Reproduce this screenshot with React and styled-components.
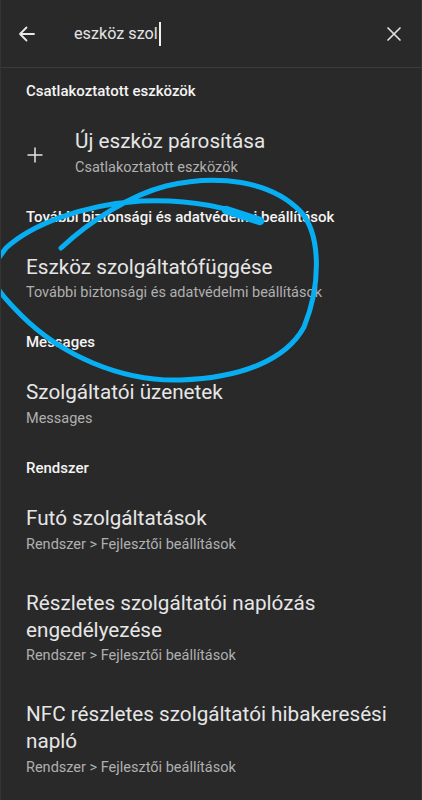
import React from "react";
import styled, { createGlobalStyle } from "styled-components";

const GlobalStyle = createGlobalStyle`
  html, body {
    margin: 0;
    padding: 0;
    background: #292929;
  }
  body {
    font-family: Roboto, "Noto Sans", "DejaVu Sans", sans-serif;
  }
`;

const Screen = styled.div`
  position: relative;
  width: 422px;
  height: 800px;
  box-sizing: border-box;
  background: #292929;
  border-left: 1px solid #343434;
  border-right: 1px solid #343434;
  overflow: hidden;
`;

const SearchBar = styled.div`
  display: flex;
  align-items: center;
  height: 67px;
  border-bottom: 1px solid #3b3b3b;
  padding: 0 17px 0 16px;
`;

const IconButton = styled.div`
  width: 20px;
  height: 20px;
  display: flex;
  align-items: center;
  justify-content: center;
  flex: none;
`;

const Query = styled.div`
  flex: 1;
  display: flex;
  align-items: center;
  margin-left: 37px;
  font-size: 16.2px;
  color: #e4e4e4;
`;

const Cursor = styled.span`
  display: inline-block;
  width: 2px;
  height: 24px;
  margin-left: 1px;
  background: #f0f0f0;
`;

const List = styled.div`
  padding-top: 2px;
`;

const SectionHeader = styled.div`
  padding: 11px 25px 10px;
  font-size: 15px;
  line-height: 20px;
  font-weight: 500;
  color: #f4f4f4;
`;

const Item = styled.div`
  display: flex;
  align-items: center;
  padding: 17px 25px;
`;

const ItemIcon = styled.div`
  width: 49px;
  flex: none;
  display: flex;
  align-items: center;
  padding-top: 4px;
`;

const ItemText = styled.div`
  display: flex;
  flex-direction: column;
`;

const Title = styled.div`
  font-size: 20.7px;
  line-height: 26.7px;
  color: #e6e6e6;
`;

const Subtitle = styled.div`
  margin-top: 2px;
  font-size: 14.5px;
  line-height: 22px;
  color: #b0b0b0;
`;

const Scribble = styled.svg`
  position: absolute;
  left: 0;
  top: 0;
  pointer-events: none;
`;

const BackArrow = () => (
  <svg width="18" height="18" viewBox="0 0 18 18" fill="none" stroke="#e8e8e8" strokeWidth="1.8" strokeLinecap="round" strokeLinejoin="round">
    <path d="M16 9H2M8.5 2.5L2 9l6.5 6.5" />
  </svg>
);

const CloseIcon = () => (
  <svg width="16" height="16" viewBox="0 0 16 16" fill="none" stroke="#e0e0e0" strokeWidth="1.7" strokeLinecap="round">
    <path d="M2 2l12 12M14 2L2 14" />
  </svg>
);

const PlusIcon = () => (
  <svg width="18" height="18" viewBox="0 0 18 18" fill="none" stroke="#e4e4e4" strokeWidth="1.5">
    <path d="M9 1.5v15M1.5 9h15" />
  </svg>
);

const sections = [
  {
    header: "Csatlakoztatott eszközök",
    items: [{ title: "Új eszköz párosítása", sub: "Csatlakoztatott eszközök", icon: true }],
  },
  {
    header: "További biztonsági és adatvédelmi beállítások",
    items: [{ title: "Eszköz szolgáltatófüggése", sub: "További biztonsági és adatvédelmi beállítások" }],
  },
  {
    header: "Messages",
    items: [{ title: "Szolgáltatói üzenetek", sub: "Messages" }],
  },
  {
    header: "Rendszer",
    items: [
      { title: "Futó szolgáltatások", sub: "Rendszer > Fejlesztői beállítások" },
      { title: "Részletes szolgáltatói naplózás engedélyezése", sub: "Rendszer > Fejlesztői beállítások" },
      { title: "NFC részletes szolgáltatói hibakeresési napló", sub: "Rendszer > Fejlesztői beállítások" },
    ],
  },
];

export default function App() {
  return (
    <>
      <GlobalStyle />
      <Screen>
        <SearchBar>
          <IconButton><BackArrow /></IconButton>
          <Query>
            eszköz szol<Cursor />
          </Query>
          <IconButton><CloseIcon /></IconButton>
        </SearchBar>
        <List>
          {sections.map((section) => (
            <div key={section.header}>
              <SectionHeader>{section.header}</SectionHeader>
              {section.items.map((item) => (
                <Item key={item.title}>
                  {item.icon && (
                    <ItemIcon><PlusIcon /></ItemIcon>
                  )}
                  <ItemText>
                    <Title>{item.title}</Title>
                    <Subtitle>{item.sub}</Subtitle>
                  </ItemText>
                </Item>
              ))}
            </div>
          ))}
        </List>
        <Scribble width="422" height="800" viewBox="0 0 422 800">
          <path
            d="M60 248 C90 220 130 195 165 186 C215 174 270 180 300 212 C320 235 320 285 303 327 C285 360 240 378 180 380 C120 382 60 355 20 315 C5 300 -10 285 -8 270 C-5 260 0 255 5 248 C30 225 80 205 140 201 C190 199 230 208 258 221"
            fill="none"
            stroke="#08aef2"
            strokeWidth="5"
            strokeLinecap="round"
            strokeLinejoin="round"
          />
          <path d="M225 210 L259 221" stroke="#08aef2" strokeWidth="8.5" strokeLinecap="round" />
        </Scribble>
      </Screen>
    </>
  );
}
